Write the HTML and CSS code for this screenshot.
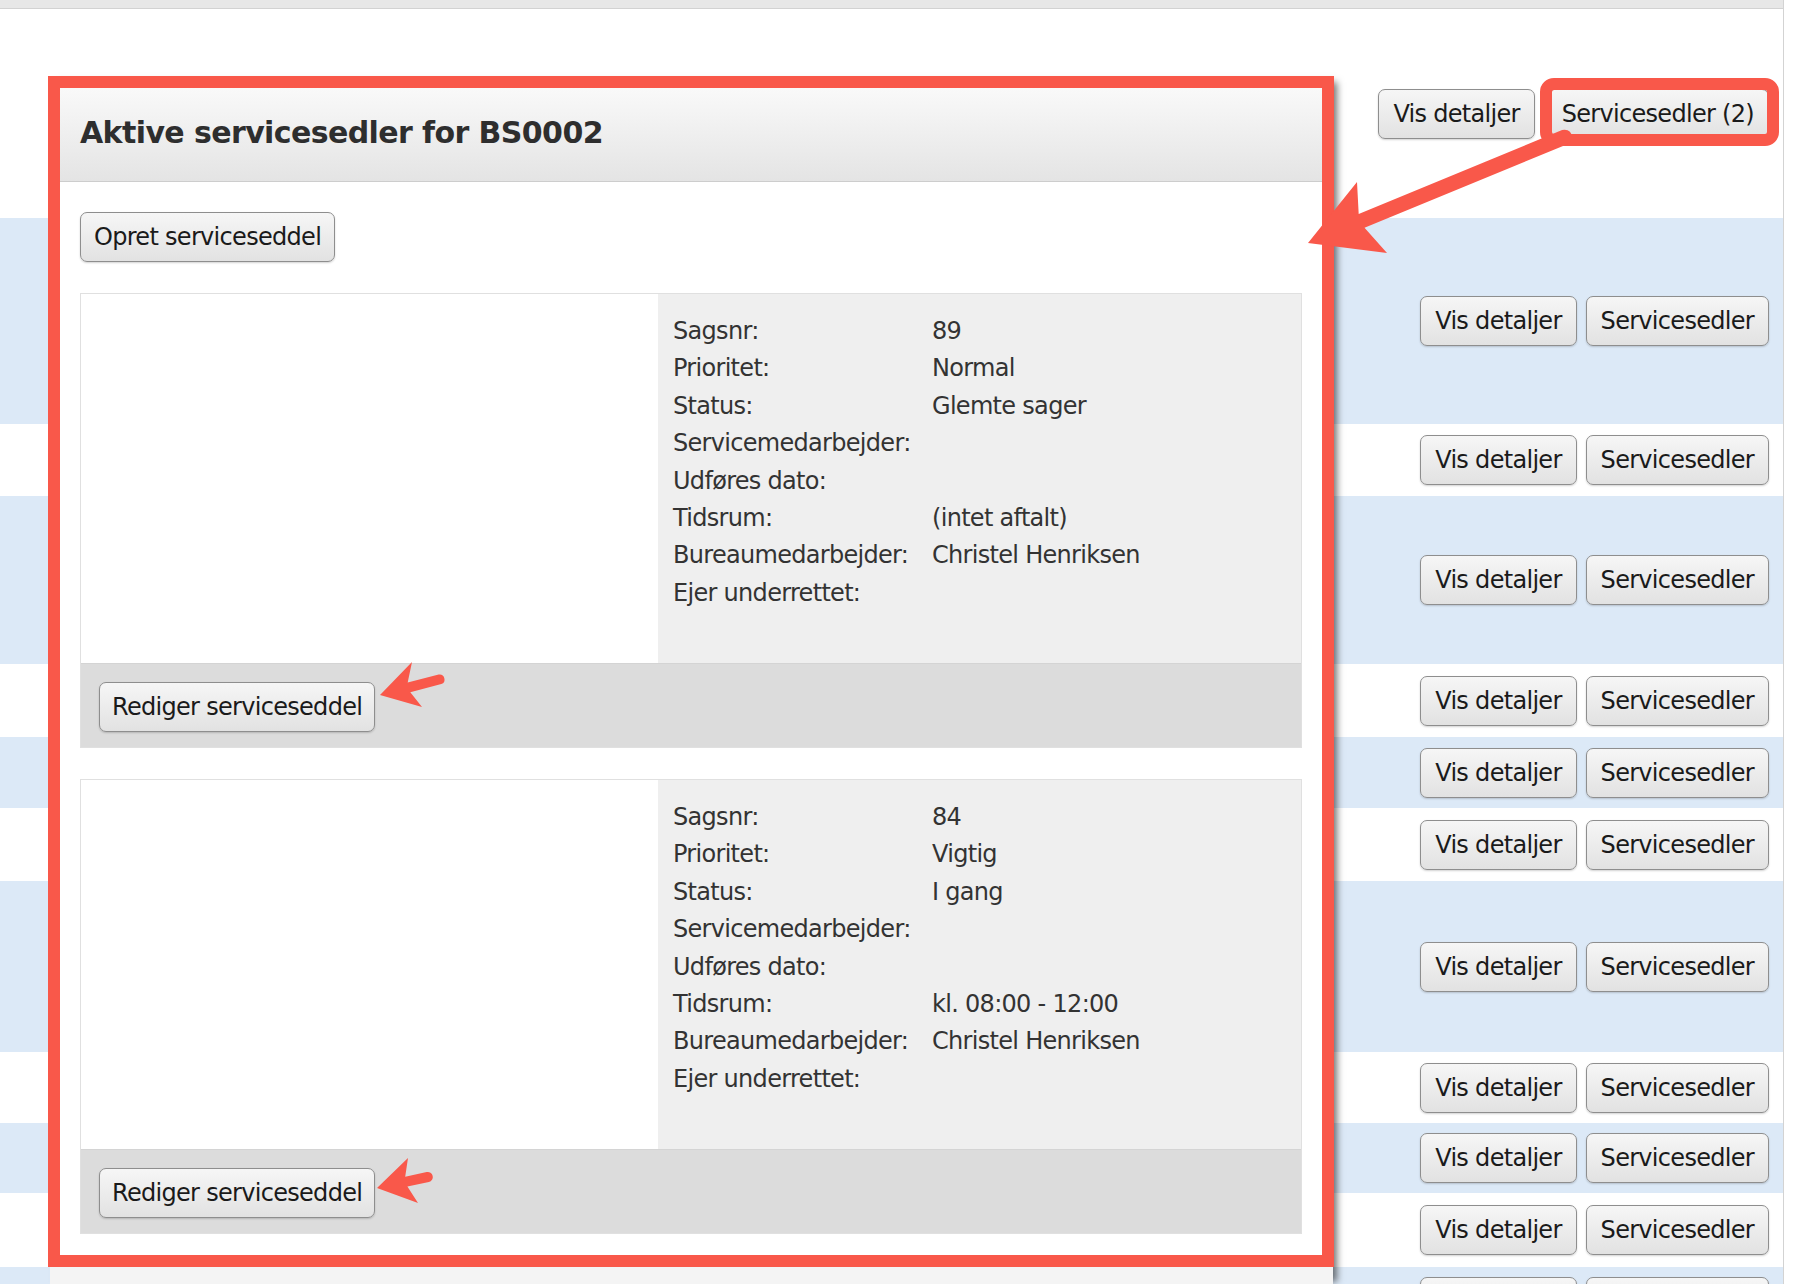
FILE: index.html
```html
<!DOCTYPE html>
<html lang="da">
<head>
<meta charset="utf-8">
<title>Aktive servicesedler for BS0002</title>
<link rel="stylesheet" href="styles.css">
</head>
<body>
<div class="page">
  <div class="topbar"></div>
  <div class="rows">
    <div class="row r0"><button class="btn">Vis detaljer</button><button class="btn">Servicesedler (2)</button></div>
    <div class="row r1 blue"><button class="btn">Vis detaljer</button><button class="btn">Servicesedler</button></div>
    <div class="row r2"><button class="btn">Vis detaljer</button><button class="btn">Servicesedler</button></div>
    <div class="row r3 blue"><button class="btn">Vis detaljer</button><button class="btn">Servicesedler</button></div>
    <div class="row r4"><button class="btn">Vis detaljer</button><button class="btn">Servicesedler</button></div>
    <div class="row r5 blue"><button class="btn">Vis detaljer</button><button class="btn">Servicesedler</button></div>
    <div class="row r6"><button class="btn">Vis detaljer</button><button class="btn">Servicesedler</button></div>
    <div class="row r7 blue"><button class="btn">Vis detaljer</button><button class="btn">Servicesedler</button></div>
    <div class="row r8"><button class="btn">Vis detaljer</button><button class="btn">Servicesedler</button></div>
    <div class="row r9 blue"><button class="btn">Vis detaljer</button><button class="btn">Servicesedler</button></div>
    <div class="row r10"><button class="btn">Vis detaljer</button><button class="btn">Servicesedler</button></div>
    <div class="row r11 blue"><button class="btn">Vis detaljer</button><button class="btn">Servicesedler</button></div>
  </div>
</div>

<div class="dialog">
  <div class="dialog-header"><h1 class="dialog-title">Aktive servicesedler for BS0002</h1></div>
  <div class="dialog-body">
    <button class="btn">Opret serviceseddel</button>

    <div class="card">
      <div class="card-body">
        <div class="card-left"></div>
        <div class="card-info">
          <dl class="details">
            <dt>Sagsnr:</dt><dd>89</dd>
            <dt>Prioritet:</dt><dd>Normal</dd>
            <dt>Status:</dt><dd>Glemte sager</dd>
            <dt>Servicemedarbejder:</dt><dd></dd>
            <dt>Udføres dato:</dt><dd></dd>
            <dt>Tidsrum:</dt><dd>(intet aftalt)</dd>
            <dt>Bureaumedarbejder:</dt><dd>Christel Henriksen</dd>
            <dt>Ejer underrettet:</dt><dd></dd>
          </dl>
        </div>
      </div>
      <div class="card-footer"><button class="btn">Rediger serviceseddel</button></div>
    </div>

    <div class="card">
      <div class="card-body">
        <div class="card-left"></div>
        <div class="card-info">
          <dl class="details">
            <dt>Sagsnr:</dt><dd>84</dd>
            <dt>Prioritet:</dt><dd>Vigtig</dd>
            <dt>Status:</dt><dd>I gang</dd>
            <dt>Servicemedarbejder:</dt><dd></dd>
            <dt>Udføres dato:</dt><dd></dd>
            <dt>Tidsrum:</dt><dd>kl. 08:00 - 12:00</dd>
            <dt>Bureaumedarbejder:</dt><dd>Christel Henriksen</dd>
            <dt>Ejer underrettet:</dt><dd></dd>
          </dl>
        </div>
      </div>
      <div class="card-footer"><button class="btn">Rediger serviceseddel</button></div>
    </div>
  </div>
  <div class="dialog-footer"></div>
</div>

<div class="mark-box"></div>
<div class="mark-btn"></div>

<svg class="arrows" width="1794" height="1284" viewBox="0 0 1794 1284" xmlns="http://www.w3.org/2000/svg">
  <path d="M1308,243 L1357,182 L1358.7,214 L1562.1,130.1 A7.5,7.5 0 0 1 1567.9,143.9 L1364.5,227.8 L1387,253 Z"/>
  <path d="M380,695 L412,662 L407.7,682.6 L438.7,674.5 A5,5 0 0 1 441.3,684.1 L410.3,692.2 L422,707 Z"/>
  <path d="M377,1188 L408,1158 L405.2,1176.8 L426.7,1172.1 A5,5 0 0 1 428.9,1181.9 L407.4,1186.6 L418,1203 Z"/>
</svg>
</body>
</html>
```

FILE: styles.css
```css
html, body {
  margin: 0;
  padding: 0;
  width: 1794px;
  height: 1284px;
  overflow: hidden;
  background: #ffffff;
}

body {
  position: relative;
  font-family: "DejaVu Sans", Verdana, sans-serif;
  font-size: 24px;
  letter-spacing: -0.7px;
  color: #2e2e2e;
}

.page {
  width: 1783px;
  height: 1284px;
  border-right: 1px solid #d3d3d3;
  overflow: hidden;
}

.topbar {
  height: 8px;
  background: #e7e7e7;
  border-bottom: 1px solid #d2d2d2;
}

.row {
  display: flex;
  justify-content: flex-end;
  align-items: center;
  gap: 9px;
  padding-right: 14px;
  background: #ffffff;
}

.row.blue { background: #dce9f7; }

.r0 { height: 209px; }
.r1 { height: 206px; }
.r2 { height: 72px; }
.r3 { height: 168px; }
.r4 { height: 73px; }
.r5 { height: 71px; }
.r6 { height: 73px; }
.r7 { height: 171px; }
.r8 { height: 71px; }
.r9 { height: 70px; }
.r10 { height: 74px; }
.r11 { height: 70px; }

.r0 { gap: 12px; }

.btn {
  font-family: inherit;
  font-size: 24px;
  letter-spacing: -0.7px;
  line-height: 28px;
  padding: 10px 14px;
  margin: 0;
  border: 1px solid #8e8e8e;
  border-radius: 7px;
  background: linear-gradient(#f6f6f6, #e2e2e2);
  color: #1a1a1a;
  box-shadow: 0 1px 2px rgba(0, 0, 0, 0.18);
  white-space: nowrap;
}

/* Modal dialog */
.dialog {
  position: absolute;
  left: 50px;
  top: 80px;
  width: 1283px;
  height: 1204px;
  background: #ffffff;
  box-shadow: 6px 0 7px -2px rgba(0, 0, 0, 0.55);
  display: flex;
  flex-direction: column;
  overflow: hidden;
}

.dialog-header {
  box-sizing: border-box;
  height: 102px;
  padding: 35px 30px 0;
  background: linear-gradient(#fbfbfb, #e4e4e4);
  border-bottom: 1px solid #cdcdcd;
}

.dialog-title {
  margin: 0;
  font-size: 30px;
  line-height: 36px;
  letter-spacing: -0.6px;
  font-weight: bold;
  color: #2e2e2e;
}

.dialog-body {
  padding: 30px 31px 25px 30px;
  display: flex;
  flex-direction: column;
  align-items: flex-start;
}

.dialog-body > .btn { padding: 10px 13px; }

.card {
  align-self: stretch;
  margin-top: 31px;
  border: 1px solid #e0e0e0;
}

.card-body {
  display: grid;
  grid-template-columns: 577px 1fr;
  height: 369px;
}

.card-left { background: #ffffff; }

.card-info {
  background: #efefef;
  padding: 19px 0 0 15px;
}

.details {
  display: grid;
  grid-template-columns: 259px 1fr;
  margin: 0;
  line-height: 37.4px;
  color: #333333;
}

.details dt, .details dd {
  margin: 0;
  min-height: 37.4px;
}

.card-footer {
  height: 84px;
  box-sizing: border-box;
  padding: 18px 18px 16px;
  background: #dcdcdc;
  border-top: 1px solid #d4d4d4;
}

.card-footer .btn { padding: 10px 12px; }

.dialog-footer {
  flex: 1;
  background: #f4f4f4;
  border-top: 1px solid #e2e2e2;
}

/* Annotations drawn over the screenshot */
.mark-box {
  position: absolute;
  left: 48px;
  top: 76px;
  width: 1286px;
  height: 1191px;
  box-sizing: border-box;
  border: 12px solid #f9584a;
}

.mark-btn {
  position: absolute;
  left: 1540px;
  top: 78px;
  width: 239px;
  height: 68px;
  box-sizing: border-box;
  border: 12px solid #f9584a;
  border-radius: 14px;
}

.arrows {
  position: absolute;
  left: 0;
  top: 0;
  pointer-events: none;
  fill: #f9584a;
}
```
